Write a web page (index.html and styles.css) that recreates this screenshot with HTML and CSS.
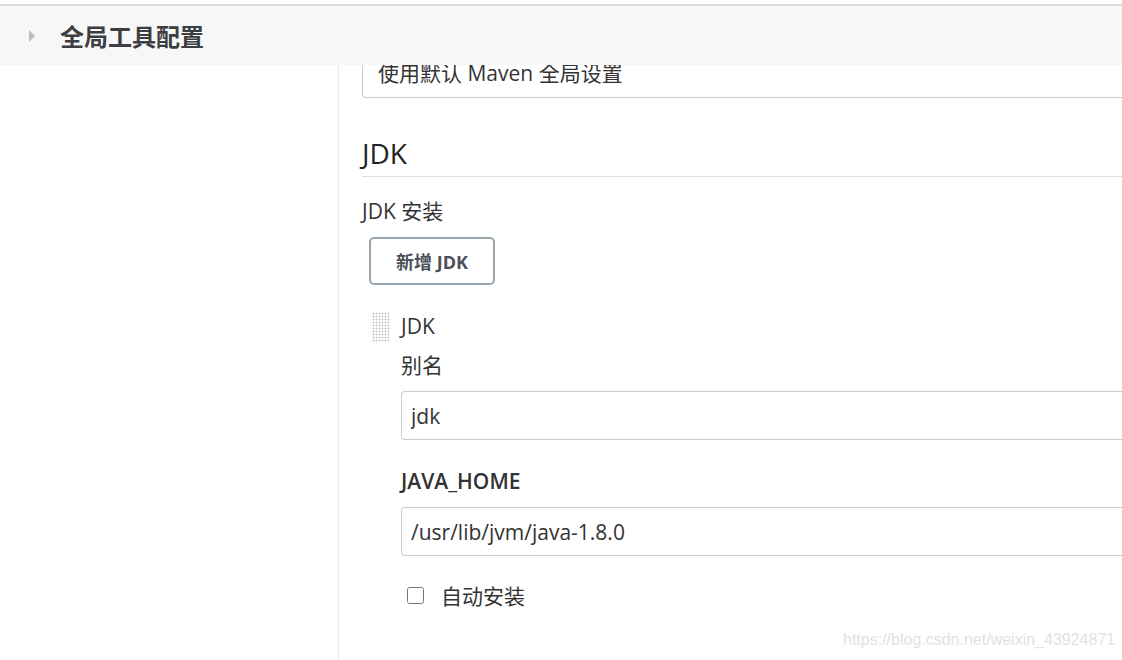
FILE: index.html
```html
<!DOCTYPE html>
<html lang="zh-CN">
<head>
  <meta charset="UTF-8" />
  <title>全局工具配置</title>
  <link rel="stylesheet" href="styles.css">
</head>
<body>

  <header>
    <span class="caret"></span>
    <h1>全局工具配置</h1>
  </header>

  <div class="page">
    <aside class="side"></aside>

    <main>
      <div class="field first">
        <div class="input">使用默认 Maven 全局设置</div>
      </div>

      <h2>JDK</h2>
      <div class="label">JDK 安装</div>
      <button class="add">新增 JDK</button>

      <div class="install">
        <span class="handle"></span>
        <div class="body">
          <div class="name">JDK</div>
          <div class="label">别名</div>
          <input type="text" value="jdk" />
          <div class="label strong">JAVA_HOME</div>
          <input type="text" value="/usr/lib/jvm/java-1.8.0" />
          <label class="check">
            <input type="checkbox" />
            <span>自动安装</span>
          </label>
        </div>
      </div>
    </main>
  </div>

  <div class="watermark">https://blog.csdn.net/weixin_43924871</div>

</body>
</html>
```

FILE: styles.css
```css
body {
  margin: 0;
  padding: 0;
  font-family: "Open Sans", "Noto Sans CJK SC", sans-serif;
  color: #333;
  overflow: hidden;
  height: 660px;
}

header {
  position: relative;
  z-index: 2;
  display: flex;
  align-items: center;
  height: 59px;
  margin-top: 4px;
  border-top: 2px solid #dcdcdc;
  background-color: #f7f7f7;
}
.caret {
  width: 0;
  height: 0;
  margin-left: 29px;
  margin-right: 25px;
  border-top: 6px solid transparent;
  border-bottom: 6px solid transparent;
  border-left: 6px solid #bcbcbc;
}
header h1 {
  margin: 0;
  font-size: 24px;
  font-weight: bold;
  color: #3b3e42;
  font-family: "Noto Sans CJK SC", sans-serif;
}

.page { display: flex; height: 600px; }
.side {
  width: 338px;
  flex: none;
  border-right: 1px solid #e6eaec;
}

main {
  flex: 1;
  padding-left: 23px;
  min-width: 0;
}

.field.first { margin-top: -16px; }
.input, input[type="text"] {
  box-sizing: border-box;
  display: block;
  width: 100%;
  height: 49px;
  padding: 0 15px;
  border: 1px solid #ccc;
  border-right: none;
  border-radius: 4px 0 0 4px;
  font-family: "Open Sans", "Noto Sans CJK SC", sans-serif;
  font-size: 21px;
  line-height: 47px;
  color: #333;
  background: white;
}

h2 {
  margin: 36px 0 0;
  padding-bottom: 4px;
  border-bottom: 1px solid #ddd;
  font-size: 28px;
  font-weight: 500;
  line-height: 38px;
  color: #222;
}

.label {
  margin-top: 20px;
  font-size: 21px;
  line-height: 28px;
}
.label.strong { font-weight: 600; margin-top: 27px; }

button.add {
  display: block;
  margin: 12px 0 0 7px;
  width: 126px;
  height: 48px;
  border: 2px solid #9aa4ac;
  border-radius: 5px;
  background: white;
  font-family: "Open Sans", "Noto Sans CJK SC", sans-serif;
  font-size: 18px;
  font-weight: bold;
  color: #4a5058;
}

.install {
  display: flex;
  margin-top: 25px;
  margin-left: 10px;
}
.handle {
  flex: none;
  width: 18px;
  height: 30px;
  margin-top: 2px;
  margin-right: 11px;
  background-image: radial-gradient(circle, #c8c8c8 0.9px, transparent 1.1px);
  background-size: 3px 3px;
}
.install .body { flex: 1; min-width: 0; }
.name { font-size: 21px; line-height: 28px; margin-top: 2px; }
.install .label { margin-top: 11px; }
.install input[type="text"] { margin-top: 12px; padding: 0 9px; }
.install .label.strong { margin-top: 27px; }

.check {
  display: flex;
  align-items: center;
  margin-top: 24px;
  margin-left: 6px;
  font-size: 21px;
}
.check input {
  width: 17px;
  height: 17px;
  margin: 0 17px 0 0;
}

.watermark {
  position: absolute;
  left: 843px;
  top: 631px;
  font-family: "Liberation Sans", sans-serif;
  font-size: 16px;
  color: #e2e2e2;
}
```
